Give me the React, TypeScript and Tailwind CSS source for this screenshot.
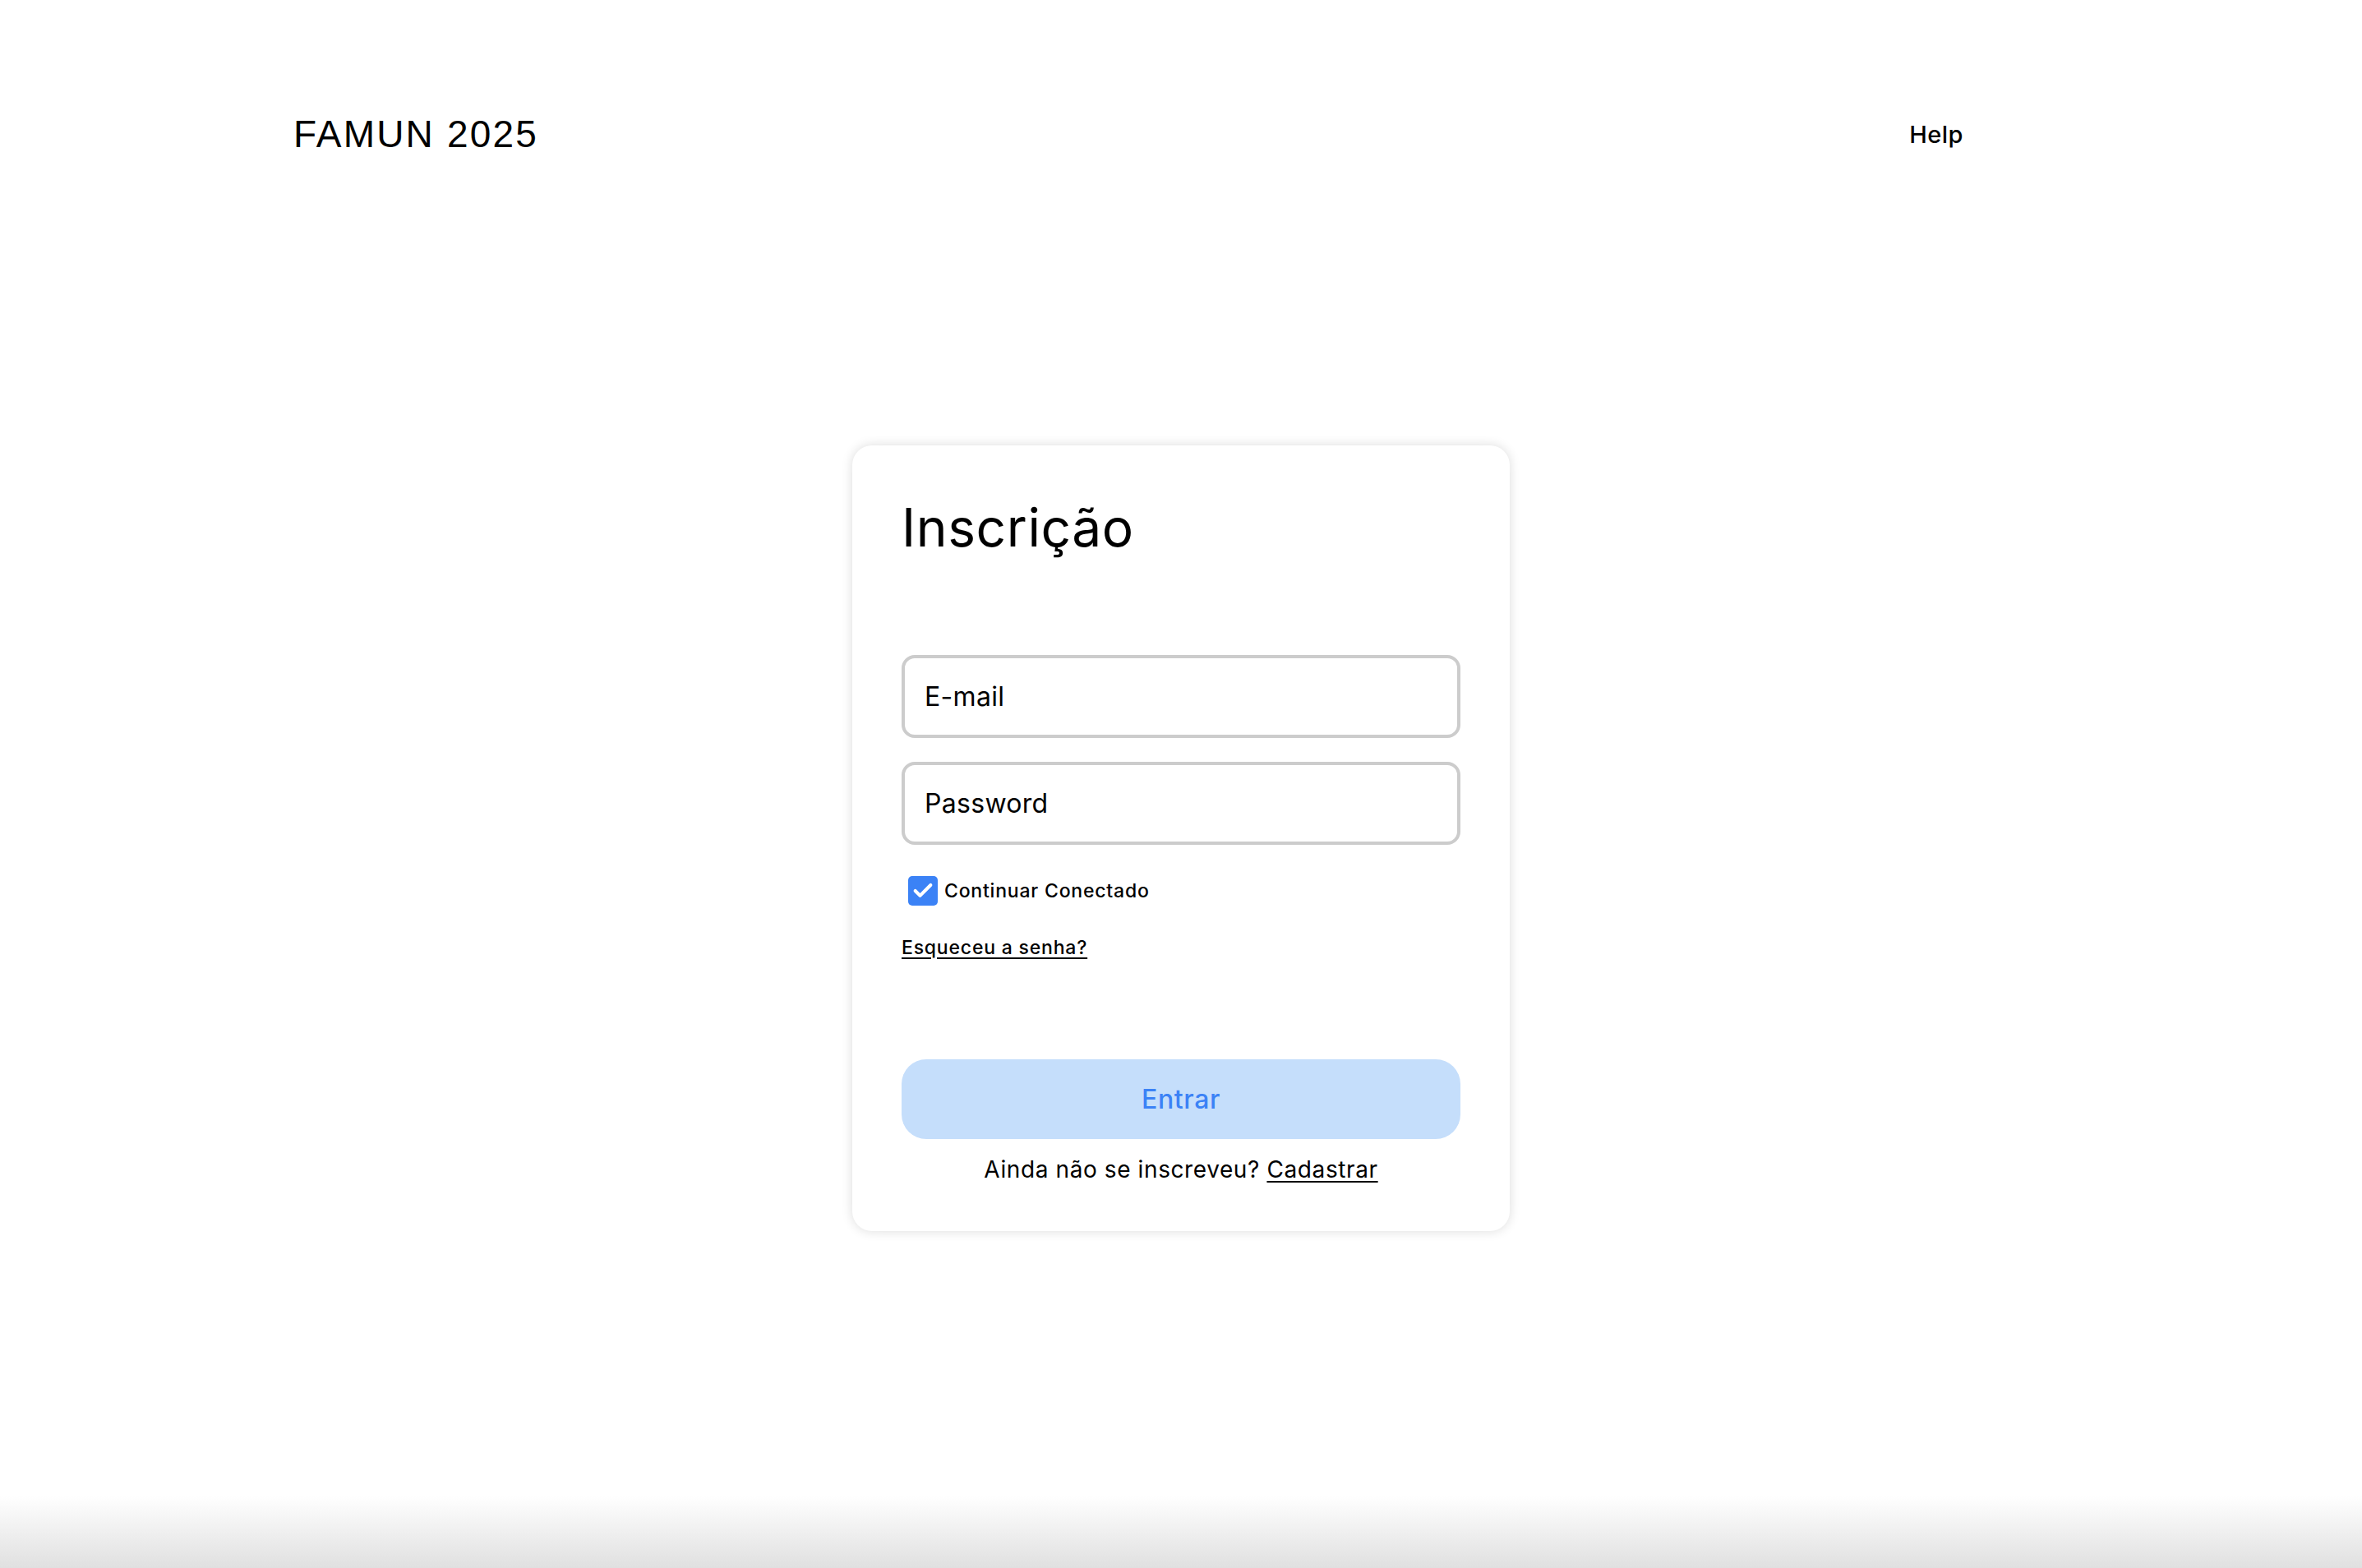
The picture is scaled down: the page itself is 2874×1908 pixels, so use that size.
import { Check } from "lucide-react";

export default function App() {
  return (
    <div className="flex min-h-screen flex-col bg-white font-['Inter',sans-serif] text-black">
      <header className="mt-[136px] flex h-[54px] items-center justify-between pl-[357px] pr-[485px]">
        <span className="font-['Liberation_Sans',Arial,sans-serif] text-[46px] leading-none tracking-[2.2px]">
          FAMUN 2025
        </span>
        <a href="#" className="text-[29px] font-medium leading-none tracking-[0.5px]">
          Help
        </a>
      </header>

      <main className="mt-[352px] flex justify-center">
        <div className="w-[800px] rounded-[24px] bg-white px-[60px] pb-[57px] pt-[60px] shadow-[0_0_14px_rgba(0,0,0,0.14)]">
          <h1 className="text-[64px] font-normal leading-[80px] tracking-[0.6px]">Inscrição</h1>

          <form className="mt-[115px] flex flex-col">
            <input
              type="email"
              placeholder="E-mail"
              className="h-[101px] rounded-[16px] border-4 border-[#cccccc] px-[24px] text-[32px] tracking-[0.3px] placeholder:text-black focus:outline-none"
            />
            <input
              type="password"
              placeholder="Password"
              className="mt-[29px] h-[101px] rounded-[16px] border-4 border-[#cccccc] px-[24px] text-[32px] tracking-[0.3px] placeholder:text-black focus:outline-none"
            />

            <label className="mt-[38px] ml-[8px] flex h-[36px] items-center gap-[8px]">
              <span className="grid size-[36px] place-items-center rounded-[5px] bg-[#3b82f6]">
                <Check className="size-[28px] text-white" strokeWidth={3.5} />
              </span>
              <span className="text-[23px] font-medium tracking-[0.8px]">Continuar Conectado</span>
            </label>

            <a
              href="#"
              className="mt-[36px] self-start text-[23px] font-medium leading-[30px] tracking-[0.8px] underline underline-offset-4"
            >
              Esqueceu a senha?
            </a>

            <button
              type="button"
              className="mt-[121px] h-[97px] rounded-[30px] bg-[#c5defb] text-[32px] font-medium tracking-[0.6px] text-[#3b82f6]"
            >
              Entrar
            </button>

            <p className="mt-[19px] text-center text-[28px] leading-[36px] tracking-[0.6px]">
              Ainda não se inscreveu?{" "}
              <a href="#" className="underline underline-offset-4">
                Cadastrar
              </a>
            </p>
          </form>
        </div>
      </main>

      <div className="mt-auto h-[88px] bg-gradient-to-b from-white to-[#e0e0e0]" />
    </div>
  );
}
